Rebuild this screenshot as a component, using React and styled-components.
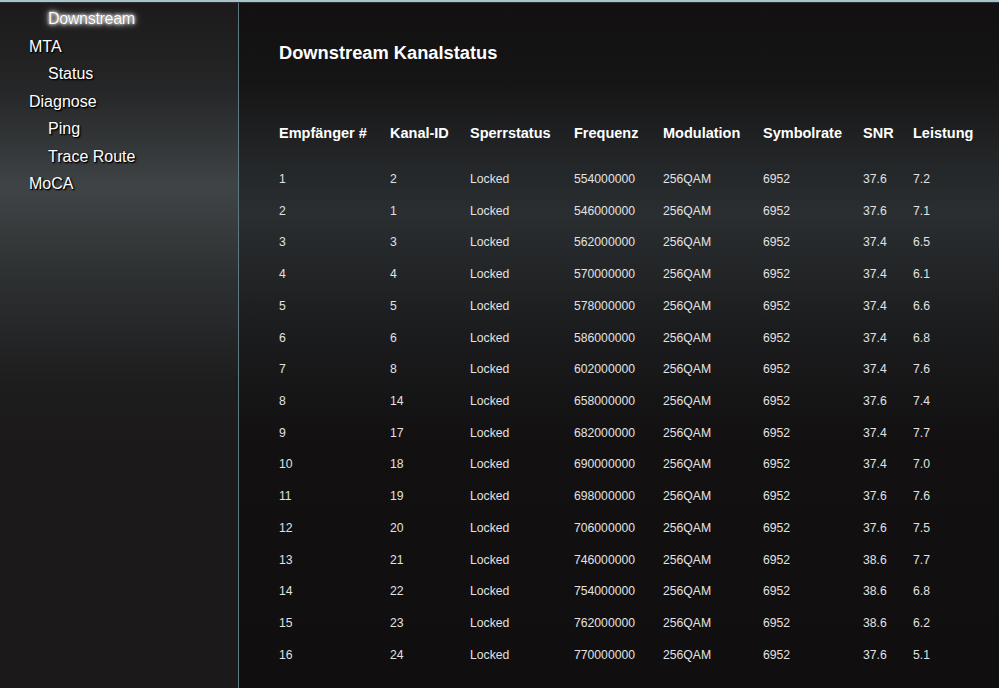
import styled, { createGlobalStyle } from 'styled-components';

const GlobalStyle = createGlobalStyle`
    html, body {
        margin : 0;
        padding : 0;
        background : #121011;
    }
    #root {
        height : 688px;
    }
`;

const menu = [
    { label : 'Downstream', sub : true, active : true },
    { label : 'MTA' },
    { label : 'Status', sub : true },
    { label : 'Diagnose' },
    { label : 'Ping', sub : true },
    { label : 'Trace Route', sub : true },
    { label : 'MoCA' },
];

const columns = ['Empfänger #', 'Kanal-ID', 'Sperrstatus', 'Frequenz', 'Modulation', 'Symbolrate', 'SNR', 'Leistung'];

const rows = [
    [1, 2, 554000000, 37.6, '7.2'],
    [2, 1, 546000000, 37.6, '7.1'],
    [3, 3, 562000000, 37.4, '6.5'],
    [4, 4, 570000000, 37.4, '6.1'],
    [5, 5, 578000000, 37.4, '6.6'],
    [6, 6, 586000000, 37.4, '6.8'],
    [7, 8, 602000000, 37.4, '7.6'],
    [8, 14, 658000000, 37.6, '7.4'],
    [9, 17, 682000000, 37.4, '7.7'],
    [10, 18, 690000000, 37.4, '7.0'],
    [11, 19, 698000000, 37.6, '7.6'],
    [12, 20, 706000000, 37.6, '7.5'],
    [13, 21, 746000000, 38.6, '7.7'],
    [14, 22, 754000000, 38.6, '6.8'],
    [15, 23, 762000000, 38.6, '6.2'],
    [16, 24, 770000000, 37.6, '5.1'],
];

function App() {
    return (
        <Page>
            <GlobalStyle />
            <TopLine />
            <Body>
                <Sidebar>
                    {menu.map((m) => (
                        <MenuItem key={m.label} $sub={m.sub} $active={m.active}>{m.label}</MenuItem>
                    ))}
                </Sidebar>
                <Divider />
                <Main>
                    <Title>Downstream Kanalstatus</Title>
                    <Table>
                        <HeadRow>
                            {columns.map((c) => <HeadCell key={c}>{c}</HeadCell>)}
                        </HeadRow>
                        {rows.map((r) => (
                            <Row key={r[0]}>
                                <Cell>{r[0]}</Cell>
                                <Cell>{r[1]}</Cell>
                                <Cell>Locked</Cell>
                                <Cell>{r[2]}</Cell>
                                <Cell>256QAM</Cell>
                                <Cell>6952</Cell>
                                <Cell>{r[3]}</Cell>
                                <Cell>{r[4]}</Cell>
                            </Row>
                        ))}
                    </Table>
                </Main>
            </Body>
        </Page>
    );
}

const Page = styled.div`
    display : flex;
    flex-direction : column;
    height : 688px;
    overflow : hidden;
    font-family : "Liberation Sans", Arial, sans-serif;
    color : #ffffff;
`;

const TopLine = styled.div`
    height : 2px;
    background : #a9c3c8;
    border-bottom : 1px solid #2b3134;
    flex : none;
`;

const Body = styled.div`
    display : flex;
    flex : 1;
    min-height : 0;
`;

const Sidebar = styled.nav`
    width : 238px;
    flex : none;
    display : flex;
    flex-direction : column;
    padding-top : 2px;
    background : linear-gradient(to bottom, #1c1a1b 0px, #262728 90px, #3f4446 185px, #2c2f30 280px, #1e1d1e 380px, #1b191a 450px, #1b191a 100%);
`;

const MenuItem = styled.div`
    height : 27.5px;
    line-height : 27.5px;
    padding-left : ${(p) => (p.$sub ? '48px' : '29px')};
    font-size : 16px;
    color : #ffffff;
    text-shadow : ${(p) => (p.$active
        ? '0 0 1px #555, 0 0 3px #ffffff, 0 0 5px #ffffff, 0 0 8px #bbbbbb'
        : '1px 1px 2px #000, 1px 1px 1px #000')};
    letter-spacing : ${(p) => (p.$active ? '-0.3px' : '0')};
`;

const Divider = styled.div`
    width : 1px;
    flex : none;
    background : #5e7a80;
    box-shadow : 1px 0 0 #181c1e;
`;

const Main = styled.main`
    flex : 1;
    padding-left : 40px;
    padding-top : 38px;
    background : linear-gradient(to bottom, #121011 0px, #161516 80px, #25282a 170px, #2a2e30 210px, #1c1d1f 320px, #121011 440px, #100e0f 100%);
`;

const Title = styled.h1`
    margin : 0;
    font-size : 18.3px;
    font-weight : bold;
    line-height : 24px;
    color : #ffffff;
`;

const Table = styled.div`
    margin-top : 59px;
    display : grid;
    grid-template-columns : 111px 80px 104px 89px 100px 100px 50px auto;
`;

const HeadRow = styled.div`
    display : contents;
`;

const HeadCell = styled.div`
    font-size : 14.5px;
    font-weight : bold;
    line-height : 18px;
    height : 48px;
    color : #ffffff;
    white-space : nowrap;
`;

const Row = styled.div`
    display : contents;
`;

const Cell = styled.div`
    font-size : 12.2px;
    line-height : 14px;
    height : 31.73px;
    color : #e2e2e2;
    white-space : nowrap;
`;

export default App;
